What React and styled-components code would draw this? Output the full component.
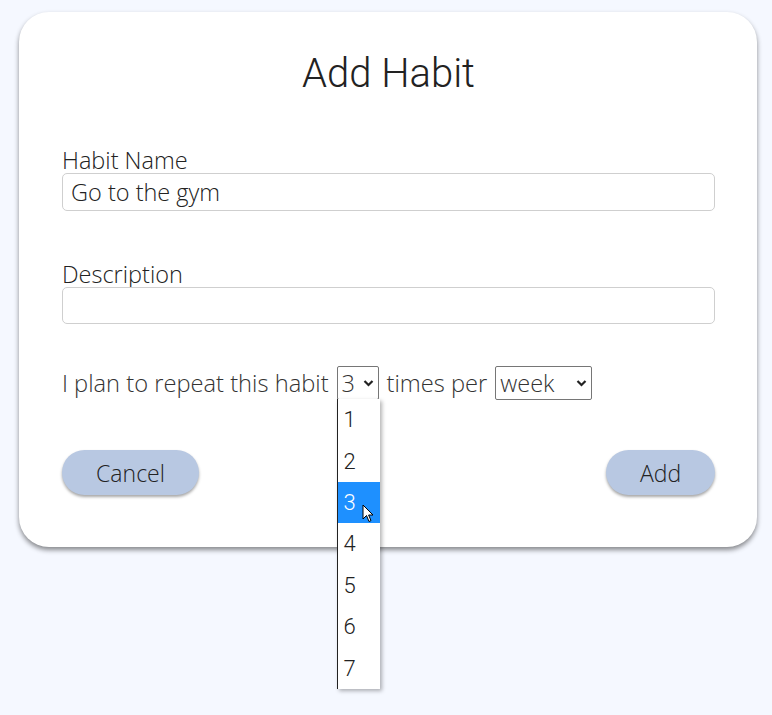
import React from "react";
import styled, { createGlobalStyle } from "styled-components";

const GlobalStyle = createGlobalStyle`
  html, body { margin: 0; padding: 0; }
  body {
    background: #f5f8ff;
    font-family: "Open Sans", "Liberation Sans", sans-serif;
    color: #222;
  }
`;

const Page = styled.div`
  padding: 12px 15px 40px 19px;
  min-height: 715px;
  box-sizing: border-box;
`;

const Card = styled.div`
  width: 738px;
  height: 535px;
  box-sizing: border-box;
  background: #fff;
  border-radius: 30px;
  box-shadow: 0 3px 5px rgba(0, 0, 0, 0.45);
  padding: 38px 42px 0 43px;
  display: flex;
  flex-direction: column;
`;

const Title = styled.h1`
  margin: 0;
  text-align: center;
  font-family: "Roboto", "Liberation Sans", sans-serif;
  font-weight: 300;
  font-size: 40px;
  line-height: 48px;
  color: #222;
`;

const Field = styled.div`
  display: flex;
  flex-direction: column;
  margin-top: ${(p) => p.$top}px;
`;

const Label = styled.label`
  font-family: "Open Sans", "Liberation Sans", sans-serif;
  font-weight: 300;
  font-size: 23.5px;
  line-height: 26px;
  color: #222;
`;

const TextInput = styled.input`
  box-sizing: border-box;
  height: ${(p) => p.$h}px;
  width: 100%;
  border: 1px solid #cfcfcf;
  border-radius: 5px;
  padding: 0 8px;
  font-family: "Open Sans", "Liberation Sans", sans-serif;
  font-weight: 300;
  font-size: 23.5px;
  color: #222;
  outline: none;
`;

const PlanRow = styled.div`
  margin-top: 42px;
  display: flex;
  align-items: center;
  gap: 8px;
  font-family: "Open Sans", "Lato", sans-serif;
  font-weight: 300;
  font-size: 23.7px;
  color: #333;
`;

const SelectWrap = styled.div`
  position: relative;
  display: inline-flex;
`;

const Select = styled.select`
  appearance: none;
  -webkit-appearance: none;
  box-sizing: border-box;
  height: 34px;
  width: ${(p) => p.$w}px;
  border: 1px solid #767676;
  border-radius: 2px;
  background: #fff;
  padding: 0 0 0 4px;
  font-family: "Open Sans", "Lato", sans-serif;
  font-weight: 300;
  font-size: 23.5px;
  color: #333;
  outline: none;
`;

const Chevron = styled.svg`
  position: absolute;
  right: 5px;
  top: 13px;
  width: 11px;
  height: 8px;
  pointer-events: none;
`;

const OptionList = styled.ul`
  position: absolute;
  left: 0;
  top: 33px;
  width: 42px;
  margin: 0;
  padding: 0;
  list-style: none;
  background: #fff;
  border-left: 1px solid #222;
  box-shadow: 2px 2px 4px rgba(0, 0, 0, 0.3);
  z-index: 10;
`;

const OptionItem = styled.li`
  position: relative;
  height: 41.4px;
  display: flex;
  align-items: center;
  padding-left: 6px;
  font-family: "Roboto", "Liberation Sans", sans-serif;
  font-weight: 300;
  font-size: 22px;
  color: ${(p) => (p.$active ? "#fff" : "#222")};
  background: ${(p) => (p.$active ? "#1e90ff" : "#fff")};
`;

const Cursor = styled.svg`
  position: absolute;
  left: 24px;
  top: 22px;
  width: 12px;
  height: 19px;
`;

const ButtonRow = styled.div`
  margin-top: 50px;
  display: flex;
  justify-content: space-between;
`;

const Button = styled.button`
  height: 45px;
  width: ${(p) => p.$w}px;
  border: none;
  border-radius: 23px;
  background: #b8c8e2;
  box-shadow: 0 2px 3px rgba(0, 0, 0, 0.35);
  font-family: "Open Sans", "Lato", sans-serif;
  font-weight: 300;
  font-size: 23px;
  color: #222;
  cursor: pointer;
`;

const options = [1, 2, 3, 4, 5, 6, 7];

const ChevronIcon = () => (
  <Chevron viewBox="0 0 11 8">
    <path d="M1.5 2 L5.5 6 L9.5 2" fill="none" stroke="#222" strokeWidth="2.2" />
  </Chevron>
);

export default function App() {
  return (
    <>
      <GlobalStyle />
      <Page>
        <Card>
          <Title>Add Habit</Title>
          <Field $top={49}>
            <Label>Habit Name</Label>
            <TextInput $h={38} defaultValue="Go to the gym" />
          </Field>
          <Field $top={50}>
            <Label>Description</Label>
            <TextInput $h={37} defaultValue="" />
          </Field>
          <PlanRow>
            <span>I plan to repeat this habit</span>
            <SelectWrap>
              <Select $w={42} defaultValue="3">
                {options.map((o) => (
                  <option key={o} value={o}>{o}</option>
                ))}
              </Select>
              <ChevronIcon />
              <OptionList>
                {options.map((o) => (
                  <OptionItem key={o} $active={o === 3}>
                    {o}
                    {o === 3 && (
                      <Cursor viewBox="0 0 12 19">
                        <path d="M1 1 L1 15 L4.5 11.5 L7 17.5 L9 16.6 L6.6 11 L11 11 Z" fill="#fff" stroke="#000" strokeWidth="1" strokeLinejoin="round" />
                      </Cursor>
                    )}
                  </OptionItem>
                ))}
              </OptionList>
            </SelectWrap>
            <span>times per</span>
            <SelectWrap>
              <Select $w={97} defaultValue="week">
                <option value="day">day</option>
                <option value="week">week</option>
                <option value="month">month</option>
              </Select>
              <ChevronIcon />
            </SelectWrap>
          </PlanRow>
          <ButtonRow>
            <Button $w={137}>Cancel</Button>
            <Button $w={109}>Add</Button>
          </ButtonRow>
        </Card>
      </Page>
    </>
  );
}
